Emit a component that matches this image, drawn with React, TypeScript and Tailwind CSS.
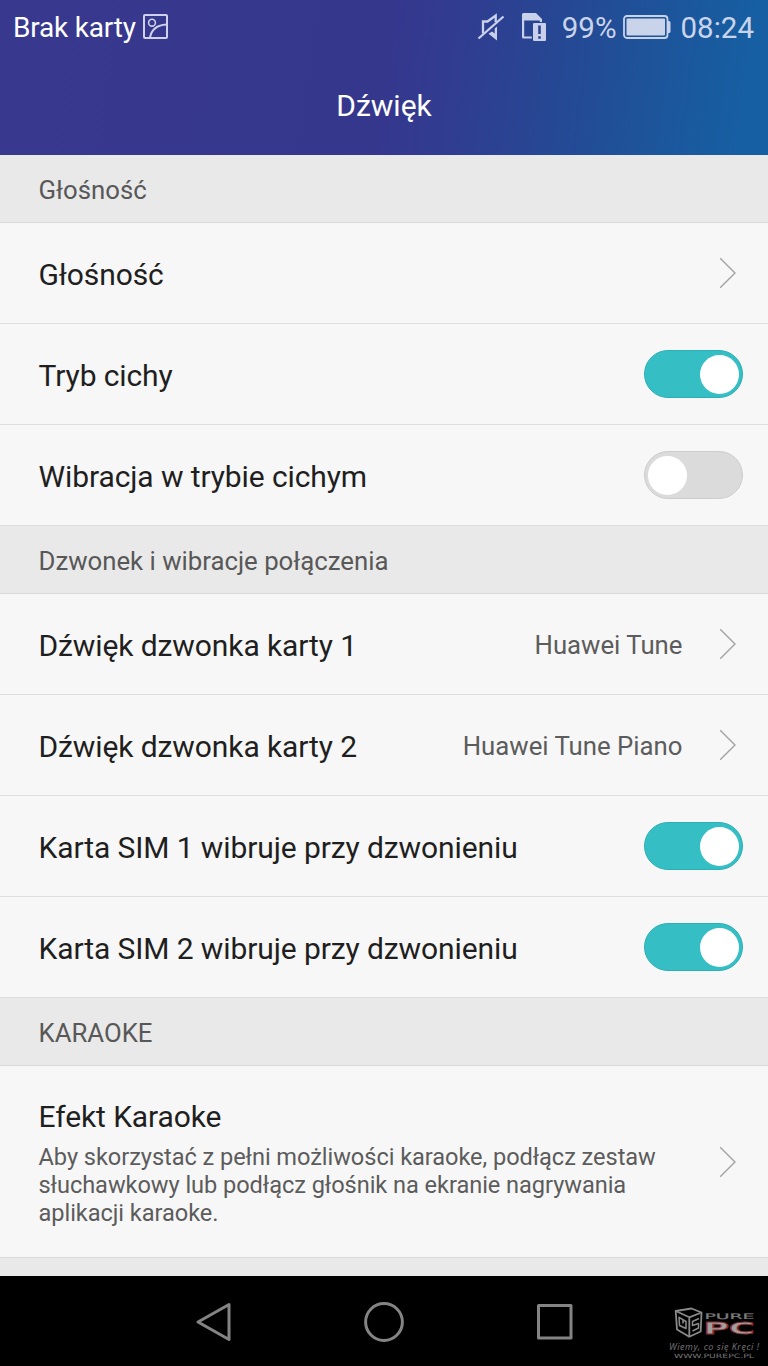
import React from 'react';

const sections = [
  {
    title: 'Głośność',
    rows: [
      { label: 'Głośność', type: 'link' },
      { label: 'Tryb cichy', type: 'switch', on: true },
      { label: 'Wibracja w trybie cichym', type: 'switch', on: false },
    ],
  },
  {
    title: 'Dzwonek i wibracje połączenia',
    rows: [
      { label: 'Dźwięk dzwonka karty 1', type: 'link', value: 'Huawei Tune' },
      { label: 'Dźwięk dzwonka karty 2', type: 'link', value: 'Huawei Tune Piano' },
      { label: 'Karta SIM 1 wibruje przy dzwonieniu', type: 'switch', on: true },
      { label: 'Karta SIM 2 wibruje przy dzwonieniu', type: 'switch', on: true },
    ],
  },
];

const Chevron = () => (
  <svg className="w-[18px] h-8 mr-[31px] shrink-0" viewBox="0 0 18 32" fill="none" stroke="#a3a3a3" strokeWidth="1.4">
    <path d="M1.2 1.3 16 16 1.2 30.7" />
  </svg>
);

const Switch = ({ on }: { on?: boolean }) => (
  <div
    className={`w-[99px] h-[48px] mr-[25px] rounded-full border flex items-center shrink-0 ${
      on ? 'bg-[#35bfc5] border-[#2bb0b6] justify-end pr-[3px]' : 'bg-[#dbdbdb] border-[#cdcdcd] justify-start pl-[3px]'
    }`}
  >
    <div className="w-[39px] h-[39px] rounded-full bg-white" />
  </div>
);

const SectionHeader = ({ title }: { title: string }) => (
  <div className="h-[68px] pl-[38.5px] pt-[3px] flex items-center bg-[#e9e9e9] border-b border-[#d9d9d9] text-[25.75px] text-[#585858]">
    {title}
  </div>
);

const StatusBar = () => (
  <div className="h-[54px] pl-[13px] pr-[14px] pt-[2px] flex items-center justify-between text-[28px]">
    <div className="flex items-center gap-[7px]">
      <span className="text-white tracking-[-0.2px]">Brak karty</span>
      <svg className="w-[25px] h-[25px] -mt-[3px]" viewBox="0 0 25 25" fill="none" stroke="#cfd1ea" strokeWidth="2">
        <rect x="1" y="1" width="23" height="23" rx="1" />
        <circle cx="9" cy="8.7" r="3.4" strokeWidth="1.6" />
        <path d="M7 23.5C8.5 16 14 11 23.5 10.5" />
      </svg>
    </div>
    <div className="flex items-center text-[#c9d4eb]">
      <svg className="w-[27px] h-[28px] mr-[17px] -mt-[3px]" viewBox="0 0 27 28" fill="none" stroke="#c9d1ea" strokeWidth="2.3">
        <path d="M1.5 25.5 26.5 3.5" />
        <path d="M6 20.5V8.5H10.5L18.7 2.5V9" />
        <path d="M20 13.5V27.5L11.5 20.8 15 18.5 17.7 20.5V15.5Z" fill="#c9d1ea" stroke="none" />
      </svg>
      <svg className="w-[26px] h-[28px] mr-[15px] -mt-[3px]" viewBox="0 0 26 28">
        <path d="M2.5 0H15L21 6V9H18.8V7.5H3.2V23.5H10.8V25.5H2.5Q1 25.5 1 24V1.5Q1 0 2.5 0Z" fill="#c9d1ea" />
        <path d="M13 10H24Q25 10 25 11V27Q25 28 24 28H13Q12 28 12 27V11Q12 10 13 10Z" fill="#c9d1ea" />
        <path d="M18.5 12.5V21M18.5 23.3V25.7" stroke="#2f4292" strokeWidth="2.6" />
      </svg>
      <span className="text-[29.5px]">99%</span>
      <svg className="w-[48px] h-[24px] ml-[6px] mr-[10px] -mt-[2px]" viewBox="0 0 48 24" fill="none">
        <rect x="1" y="1" width="43.5" height="22" rx="3" stroke="#c9d4eb" strokeWidth="1.8" />
        <rect x="3.5" y="3.5" width="38.5" height="17" rx="1" fill="#c9d4eb" />
        <path d="M45 6H46Q47.5 6 47.5 7.5V16.5Q47.5 18 46 18H45Z" fill="#c9d4eb" />
      </svg>
      <span className="text-[29.5px]">08:24</span>
    </div>
  </div>
);

const Watermark = () => (
  <svg className="absolute right-[7px] bottom-[5px] w-[94px] h-[56px]" viewBox="667 1305 94 56">
    <g fill="none" stroke="#8a8a8a" strokeWidth="1.8" strokeLinejoin="round">
      <path d="M675.7 1311 691.5 1308.5 701.5 1312.5 700.7 1331.5 689.3 1336.8 677 1329.5Z" />
      <path d="M675.7 1311 689.3 1317.3 701.5 1312.5M689.3 1317.3V1336.8" />
      <path d="M679 1317.3 686 1321.5V1328.5L679.5 1325.5ZM683 1320V1323.5" strokeWidth="1.5" />
      <path d="M699 1318.5 692.5 1321.5V1325.5L698.5 1323.5V1328L692.5 1331" strokeWidth="1.5" />
    </g>
    <text x="704.5" y="1319.2" fontSize="7.6" textLength="50" lengthAdjust="spacingAndGlyphs" fill="#7d7d7d" stroke="#7d7d7d" strokeWidth="0.2" fontFamily="DejaVu Sans">PURE</text>
    <text x="703.5" y="1334" fontSize="16" fontWeight="bold" textLength="51" lengthAdjust="spacingAndGlyphs" fill="#a0a0a0" stroke="#8d2c32" strokeWidth="0.8" fontFamily="DejaVu Sans">PC</text>
    <text x="669" y="1349.5" fontSize="9" fontStyle="italic" textLength="90" lengthAdjust="spacing" fill="#777777" fontFamily="Open Sans">Wiemy, co się Kręci !</text>
    <text x="674" y="1358" fontSize="6" textLength="80" lengthAdjust="spacingAndGlyphs" fill="#777777" fontFamily="DejaVu Sans">WWW.PUREPC.PL</text>
  </svg>
);

const App = () => {
  return (
    <div className="w-[768px] h-[1366px] overflow-hidden flex flex-col bg-[#f7f7f7] font-['Roboto',sans-serif] text-[#1f1f1f]">
      <header className="h-[155px] shrink-0 bg-[linear-gradient(98deg,#37388e_0%,#35378d_50%,#2f3e91_61%,#284592_69%,#1f5198_81%,#165fa2_96%)]">
        <StatusBar />
        <h1 className="pt-[33px] text-center text-[30px] leading-[38px] text-white">Dźwięk</h1>
      </header>

      <main className="h-[1121px] shrink-0 overflow-hidden">
        {sections.map((section) => (
          <section key={section.title}>
            <SectionHeader title={section.title} />
            {section.rows.map((row) => (
              <div key={row.label} className="h-[101px] pl-[38.5px] flex items-center border-b border-[#dedede]">
                <span className="grow pt-[3px] text-[30px] tracking-[-0.1px]">{row.label}</span>
                {row.value && <span className="mr-[36.5px] pt-[3px] text-[25.75px] text-[#5c5c5c]">{row.value}</span>}
                {row.type === 'switch' ? <Switch on={row.on} /> : <Chevron />}
              </div>
            ))}
          </section>
        ))}

        <section>
          <SectionHeader title="KARAOKE" />
          <div className="h-[192px] pl-[38.5px] flex items-center border-b border-[#d9d9d9]">
            <div className="grow">
              <div className="text-[30px] leading-[40px] tracking-[-0.1px]">Efekt Karaoke</div>
              <p className="w-[640px] mt-[6px] text-[23.6px] leading-[28px] tracking-[-0.06px] text-[#5c5c5c]">
                Aby skorzystać z pełni możliwości karaoke, podłącz zestaw
                <br />
                słuchawkowy lub podłącz głośnik na ekranie nagrywania
                <br />
                aplikacji karaoke.
              </p>
            </div>
            <Chevron />
          </div>
        </section>
        <div className="h-[18px] bg-[#e9e9e9]" />
      </main>

      <nav className="relative h-[90px] shrink-0 px-[192px] pt-px flex items-center justify-between bg-black">
        <svg className="w-[42px] h-[42px]" viewBox="0 0 42 42" fill="none" stroke="#848484" strokeWidth="3" strokeLinejoin="round">
          <path d="M37 3.5V38.5L6 21Z" />
        </svg>
        <svg className="w-[42px] h-[42px]" viewBox="0 0 42 42" fill="none" stroke="#848484" strokeWidth="3">
          <circle cx="21" cy="21" r="18.4" />
        </svg>
        <svg className="w-[42px] h-[42px]" viewBox="0 0 42 42" fill="none" stroke="#848484" strokeWidth="3" strokeLinejoin="round">
          <rect x="4.5" y="4.5" width="32.5" height="32.5" />
        </svg>
        <Watermark />
      </nav>
    </div>
  );
};

export default App;
